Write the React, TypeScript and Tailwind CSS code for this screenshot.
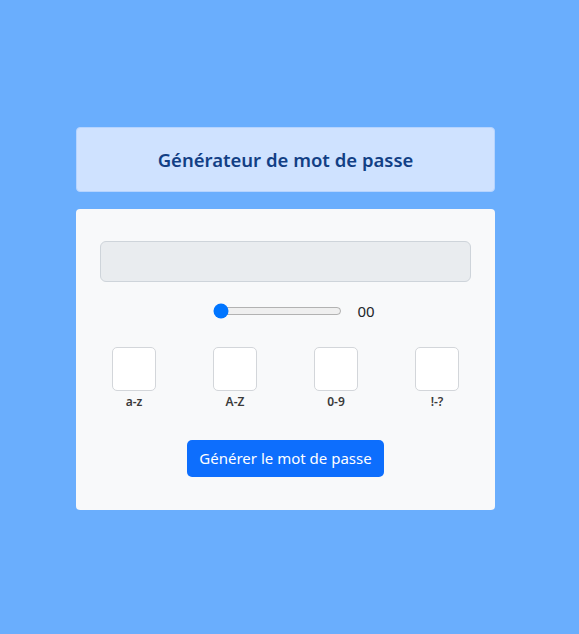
import React from "react";

export default function App() {
  const labels = ["a-z", "A-Z", "0-9", "!-?"];
  return (
    <div
      className="min-h-screen w-full bg-[#6aaefd] pt-[127px]"
      style={{ fontFamily: '"Noto Sans", "Open Sans", sans-serif' }}
    >
      <div className="ml-[76px] w-[419px]">
        <div className="flex h-[65px] items-center justify-center rounded-[4px] border border-[#b6d4fe] bg-[#cfe2ff]">
          <h1 className="text-[18.5px] font-semibold text-[#123f85]">Générateur de mot de passe</h1>
        </div>
        <div className="mt-[17px] rounded-[4px] bg-[#f8f9fa] px-6 pt-8 pb-[33px]">
          <div className="h-[41px] w-full rounded-[6px] border border-[#ced4da] bg-[#e9ecef]"></div>
          <div className="mt-[18px] flex items-center justify-center pl-[17px]">
            <input type="range" min={0} max={30} defaultValue={0} className="w-[129px]" />
            <span className="ml-[15px] text-[15px] text-[#212529]">00</span>
          </div>
          <div className="mt-[24px] flex justify-between px-3">
            {labels.map((l) => (
              <div key={l} className="flex flex-col items-center">
                <div className="h-[44px] w-[44px] rounded-[5px] border border-[#d3d6da] bg-white"></div>
                <span className="mt-[3px] text-[12px] font-semibold leading-[16px] text-[#3a3a3a]">{l}</span>
              </div>
            ))}
          </div>
          <div className="mt-[30px] flex justify-center">
            <button className="h-[37px] w-[197px] rounded-[5px] bg-[#0d6efd] text-[15px] text-white">
              Générer le mot de passe
            </button>
          </div>
        </div>
      </div>
    </div>
  );
}
